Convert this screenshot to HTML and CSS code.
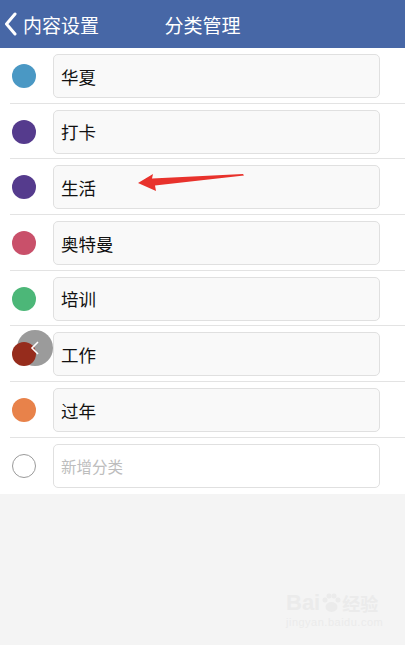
FILE: index.html
```html
<!DOCTYPE html>
<html lang="zh">
<head>
<meta charset="utf-8" />
<title>分类管理</title>
<link rel="stylesheet" href="styles.css">
</head>
<body class="page">

<div class="topbar">
	<div class="back">
		<svg class="back_icon" width="13" height="24" viewBox="0 0 13 24"><path d="M11 2 L2.5 12 L11 22" fill="none" stroke="#fff" stroke-width="3" stroke-linecap="round" stroke-linejoin="round"/></svg>
		<span>内容设置</span>
	</div>
	<div class="title">分类管理</div>
	<div></div>
</div>

<div class="list">
	<div class="row"><span class="dot c_blue"></span><div class="field">华夏</div></div>
	<div class="row"><span class="dot c_purple"></span><div class="field">打卡</div></div>
	<div class="row"><span class="dot c_purple"></span><div class="field">生活</div>
		<svg class="arrow" width="110" height="20" viewBox="0 0 110 20"><path d="M0 9 L15 0 L14 4.5 L105 0 L106 1.5 L17 11.5 L18 17 Z" fill="#e8322c"/></svg>
	</div>
	<div class="row"><span class="dot c_rose"></span><div class="field">奥特曼</div></div>
	<div class="row"><span class="dot c_green"></span><div class="field">培训</div></div>
	<div class="row"><span class="dot c_red"></span><div class="field">工作</div>
		<span class="float_btn"></span>
		<svg class="float_arrow" width="10" height="14" viewBox="0 0 10 14"><path d="M8 1 L2 7 L8 13" fill="none" stroke="#fff" stroke-width="1.6"/></svg>
	</div>
	<div class="row"><span class="dot c_orange"></span><div class="field">过年</div></div>
	<div class="row last"><span class="dot c_empty"></span><div class="field hint">新增分类</div></div>
</div>

<div class="mark">
	<div class="mark_top">
		<span>Bai</span>
		<svg width="22" height="22" viewBox="0 0 22 22"><g fill="#ebebeb"><circle cx="5" cy="8" r="2.5"/><circle cx="9" cy="4" r="2.5"/><circle cx="14" cy="4" r="2.5"/><circle cx="18" cy="8" r="2.5"/><ellipse cx="11.5" cy="15" rx="6" ry="5"/></g></svg>
		<span>经验</span>
	</div>
	<div class="mark_url">jingyan.baidu.com</div>
</div>

</body>
</html>
```

FILE: styles.css
```css
.page {
	margin: 0;
	background-color: #f4f4f4;
	font-family: "Noto Sans CJK SC", "Noto Sans", sans-serif;
}

.topbar {
	height: 48px;
	background-color: #4767a6;
	color: #fff;
	display: grid;
	grid-template-columns: 1fr auto 1fr;
	align-items: center;
	font-size: 19px;
}
.back {
	display: flex;
	align-items: center;
	padding-left: 4px;
	gap: 6px;
}
.back_icon {
	display: block;
}
.title {
	text-align: center;
}

.list {
	background-color: #fff;
}
.row {
	position: relative;
	display: flex;
	align-items: center;
	margin-left: 10px;
	padding: 6px 25px 4.7px 0;
	border-bottom: 1px solid #e3e3e3;
}
.row.last {
	border-bottom: 1px solid #fff;
}
.dot {
	position: relative;
	z-index: 2;
	flex: none;
	width: 24px;
	height: 24px;
	margin-left: 2px;
	margin-right: 17px;
	border-radius: 50%;
	box-sizing: border-box;
}
.c_blue { background-color: #4a98c4; }
.c_purple { background-color: #553b8d; }
.c_rose { background-color: #c9506a; }
.c_green { background-color: #4cb778; }
.c_red { background-color: #962c1c; }
.c_orange { background-color: #e8824a; }
.c_empty { border: 1px solid #9a9a9a; background-color: #fff; }

.field {
	flex: 1;
	height: 44px;
	box-sizing: border-box;
	display: flex;
	align-items: center;
	padding-left: 7px;
	border: 1px solid #e0e0e0;
	border-radius: 5px;
	background-color: #f9f9f9;
	font-size: 17.5px;
	color: #111;
}
.field.hint {
	background-color: #fff;
	font-size: 15.5px;
	color: #bdbdbd;
}

.arrow {
	position: absolute;
	left: 128px;
	top: 15px;
}

.float_btn {
	position: absolute;
	z-index: 1;
	left: 7px;
	top: 4px;
	width: 36px;
	height: 36px;
	border-radius: 50%;
	background-color: #9b9b9b;
}
.float_arrow {
	position: absolute;
	z-index: 3;
	left: 20px;
	top: 15px;
}

.mark {
	position: absolute;
	left: 286px;
	top: 590px;
	color: #ebebeb;
}
.mark_top {
	display: flex;
	align-items: center;
	font-size: 22px;
	font-weight: bold;
	font-family: "Liberation Sans", sans-serif;
}
.mark_top span:last-child {
	font-family: "Noto Sans CJK SC", sans-serif;
	font-size: 18px;
}
.mark_url {
	font-size: 11px;
	font-family: "Liberation Sans", sans-serif;
	letter-spacing: 0.5px;
}
```
